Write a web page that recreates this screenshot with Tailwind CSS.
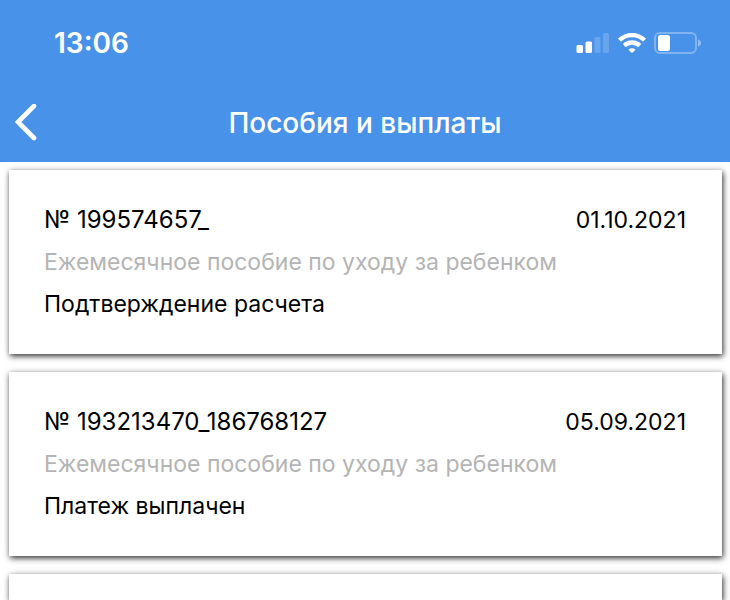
<!DOCTYPE html>
<html lang="ru">
<head>
  <meta charset="UTF-8" />
  <meta name="viewport" content="width=device-width, initial-scale=1.0"/>
  <title>Пособия и выплаты</title>
  <script src="https://cdn.jsdelivr.net/npm/@tailwindcss/browser@4"></script>
</head>
<body class="bg-white h-screen flex flex-col overflow-hidden font-['Inter',sans-serif] text-black">

  <header class="shrink-0 bg-[#4992e9] text-white">
    <!-- Status bar -->
    <div class="flex items-center justify-between h-[86px] pl-[54px] pr-7">
      <span class="text-[28px] font-semibold">13:06</span>
      <div class="flex items-center gap-2">
        <svg class="w-[34px] h-[22px]" viewBox="0 0 34 22" fill="currentColor">
          <rect x="0.500" y="13" width="6.500" height="8" rx="1.500"/>
          <rect x="9.500" y="9.500" width="6.500" height="11.500" rx="1.500"/>
          <rect x="18.500" y="5" width="6" height="16" rx="1.500" opacity=".18"/>
          <rect x="27" y="1" width="6" height="20" rx="1.500" opacity=".18"/>
        </svg>
        <svg class="w-[28px] h-[22px]" viewBox="0 0 28 22" fill="none" stroke="currentColor" stroke-width="4.400">
          <path d="M1.500 8.200a18 18 0 0 1 25 0"/>
          <path d="M6.300 13.600a11 11 0 0 1 15.400 0"/>
          <path d="M14 21l-3.600-3.300a5.200 5.200 0 0 1 7.200 0z" fill="currentColor" stroke="none"/>
        </svg>
        <svg class="w-[48px] h-[22px]" viewBox="0 0 48 22" fill="none">
          <rect x="1" y="1" width="41" height="20" rx="5" stroke="currentColor" stroke-width="2" opacity=".3"/>
          <rect x="4" y="3" width="12" height="16" rx="2.500" fill="currentColor"/>
          <path d="M44 7.500q3 1 3 3.500t-3 3.500z" fill="currentColor" opacity=".4"/>
        </svg>
      </div>
    </div>
    <!-- Title bar -->
    <div class="grid grid-cols-[1fr_auto_1fr] items-center h-[76px] pb-[2px]">
      <button type="button" aria-label="Назад" class="justify-self-start pl-[14px]">
        <svg class="w-6 h-[38px]" viewBox="0 0 24 38" fill="none" stroke="currentColor" stroke-width="4.600" stroke-linecap="round" stroke-linejoin="miter"><path d="M20 2L4 18l16 16"/></svg>
      </button>
      <h1 class="text-[28px] font-medium">Пособия и выплаты</h1>
    </div>
  </header>

  <!-- Payments list -->
  <main class="flex flex-col flex-1 min-h-0 gap-[18px] pl-[9px] pr-2 pt-2 overflow-hidden">
    <article class="shrink-0 flex flex-col gap-[10px] bg-white pl-[35px] pr-9 pt-[34px] pb-[34px] shadow-[1px_2px_6px_rgba(0,0,0,0.85)]">
      <div class="flex justify-between leading-8">
        <h2 class="text-[24px] leading-8">№ 199574657_</h2>
        <time datetime="2021-10-01" class="text-[23px] leading-8">01.10.2021</time>
      </div>
      <p class="text-[23px] leading-8 text-[#b4b4b4]">Ежемесячное пособие по уходу за ребенком</p>
      <p class="text-[23px] leading-8">Подтверждение расчета</p>
    </article>
    <article class="shrink-0 flex flex-col gap-[10px] bg-white pl-[35px] pr-9 pt-[34px] pb-[34px] shadow-[1px_2px_6px_rgba(0,0,0,0.85)]">
      <div class="flex justify-between leading-8">
        <h2 class="text-[24px] leading-8">№ 193213470_186768127</h2>
        <time datetime="2021-09-05" class="text-[23px] leading-8">05.09.2021</time>
      </div>
      <p class="text-[23px] leading-8 text-[#b4b4b4]">Ежемесячное пособие по уходу за ребенком</p>
      <p class="text-[23px] leading-8">Платеж выплачен</p>
    </article>
    <article class="flex-1 bg-white shadow-[1px_2px_6px_rgba(0,0,0,0.85)]"></article>
  </main>

</body>
</html>
